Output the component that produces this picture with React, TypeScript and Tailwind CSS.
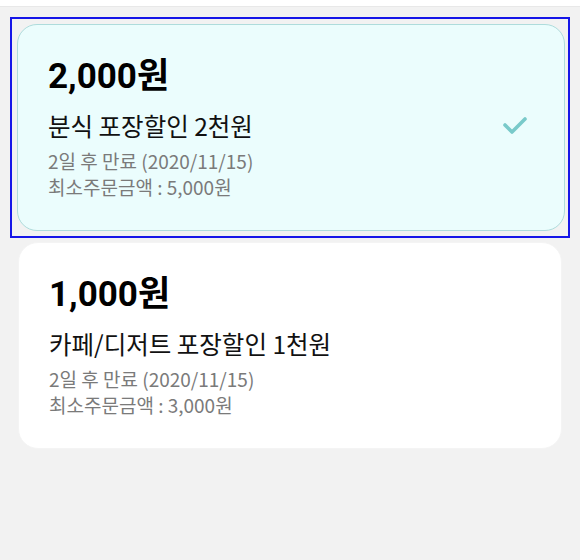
import React from "react";

type Coupon = {
  id: string;
  amount: string;
  title: string;
  expire: string;
  minOrder: string;
  selected: boolean;
};

const coupons: Coupon[] = [
  {
    id: "1",
    amount: "2,000",
    title: "분식 포장할인 2천원",
    expire: "2일 후 만료 (2020/11/15)",
    minOrder: "최소주문금액 : 5,000원",
    selected: true,
  },
  {
    id: "2",
    amount: "1,000",
    title: "카페/디저트 포장할인 1천원",
    expire: "2일 후 만료 (2020/11/15)",
    minOrder: "최소주문금액 : 3,000원",
    selected: false,
  },
];

function CheckIcon() {
  return (
    <svg width="26" height="20" viewBox="0 0 26 20" fill="none">
      <polyline
        points="3,9 10,16 23,3"
        stroke="#79caca"
        strokeWidth="3.6"
        strokeLinecap="round"
        strokeLinejoin="round"
      />
    </svg>
  );
}

function CouponCard({ coupon }: { coupon: Coupon }) {
  return (
    <article
      className={
        coupon.selected
          ? "rounded-[20px] border border-[#aedcdc] bg-[#ebfdfd] pt-[36px] pb-[30px] pl-[30px] pr-[36px]"
          : "rounded-[20px] border border-[#f4f4f4] bg-white pt-[36px] pb-[30px] pl-[30px] pr-[36px]"
      }
    >
      <p className="font-[Roboto,'Noto_Sans_CJK_KR',sans-serif] text-[35px] font-bold leading-[32px] text-black">
        {coupon.amount}원
      </p>
      <div className="mt-[17px] flex items-center justify-between">
        <h3 className="font-['Noto_Sans_CJK_KR',sans-serif] text-[24.5px] leading-[32px] text-[#111]">
          {coupon.title}
        </h3>
        {coupon.selected && <CheckIcon />}
      </div>
      <div className="mt-[6px] font-['Noto_Sans_CJK_KR',sans-serif] text-[19px] leading-[26px] text-[#7a7a7a]">
        <p>{coupon.expire}</p>
        <p>{coupon.minOrder}</p>
      </div>
    </article>
  );
}

export default function App() {
  return (
    <div className="min-h-[560px] bg-[#f2f2f2]">
      <div className="h-[7px] border-b border-[#e8e8e8] bg-white" />
      <main className="px-[10px] pt-[10px]">
        <div className="border-[2.5px] border-[#1616e8] pt-[5px] pb-[5px] pl-[5px] pr-[3px]">
          <CouponCard coupon={coupons[0]} />
        </div>
        <div className="mx-[8px] mt-[4px]">
          <CouponCard coupon={coupons[1]} />
        </div>
      </main>
    </div>
  );
}
